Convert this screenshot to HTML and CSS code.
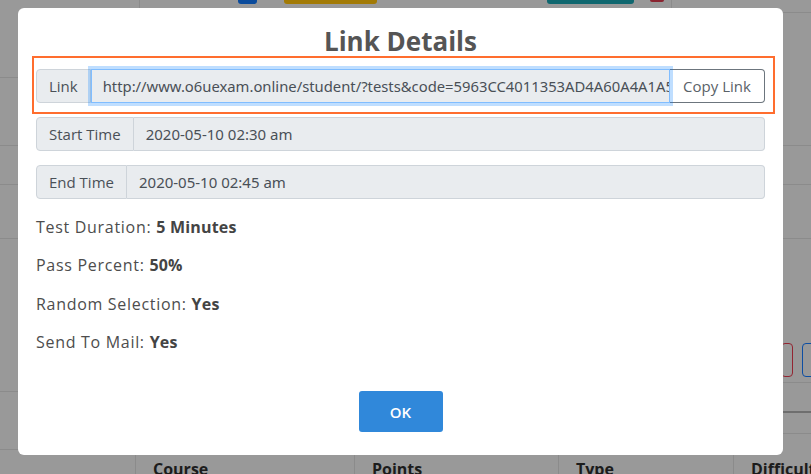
FILE: index.html
```html
<!DOCTYPE html>
<html lang="en">
<head>
<meta charset="utf-8">
<title>Link Details</title>
<link rel="stylesheet" href="styles.css">
</head>
<body>
<div class="page">
  <div class="toolbar">
    <span class="tb-sep tb-sep-1"></span>
    <span class="tb-btn tb-blue"></span>
    <span class="tb-btn tb-amber"></span>
    <span class="tb-btn tb-teal"></span>
    <span class="tb-btn tb-red"></span>
    <span class="tb-sep tb-sep-2"></span>
  </div>
  <div class="middle">
    <div class="strip strip-left">
      <div class="rule r-l1"></div>
      <div class="rule r-l2"></div>
      <div class="rule r-l3"></div>
      <div class="rule r-l4"></div>
      <div class="rule r-l5"></div>
      <div class="rule r-l6"></div>
    </div>
    <div class="strip strip-right">
      <div class="rule r-r1"></div>
      <div class="rule r-r2"></div>
      <div class="rule r-r3"></div>
      <div class="rule r-r4"></div>
      <div class="gap-r5"></div>
      <div class="btn-row">
        <span class="ghost ghost-red"></span>
        <span class="ghost ghost-blue"></span>
      </div>
      <div class="rule r-r6"></div>
      <div class="rule rule-dark r-r7"></div>
      <div class="rule r-r8"></div>
    </div>
  </div>
  <div class="thead">
    <div class="th th-0"></div>
    <div class="th th-1">Course</div>
    <div class="th th-2">Points</div>
    <div class="th th-3">Type</div>
    <div class="th th-4">Difficulty</div>
  </div>
</div>

<div class="modal">
  <h2 class="modal-title">Link Details</h2>

  <div class="igroup highlight">
    <span class="addon">Link</span>
    <div class="field field-focus"><span class="field-text">http://www.o6uexam.online/student/?tests&amp;code=5963CC4011353AD4A60A4A1A5</span></div>
    <button class="btn-copy" type="button">Copy Link</button>
  </div>

  <div class="igroup">
    <span class="addon">Start Time</span>
    <div class="field">2020-05-10 02:30 am</div>
  </div>

  <div class="igroup">
    <span class="addon">End Time</span>
    <div class="field">2020-05-10 02:45 am</div>
  </div>

  <div class="details">
    <p>Test Duration: <b>5 Minutes</b></p>
    <p>Pass Percent: <b>50%</b></p>
    <p>Random Selection: <b>Yes</b></p>
    <p>Send To Mail: <b>Yes</b></p>
  </div>

  <div class="modal-footer">
    <button class="btn-ok" type="button">OK</button>
  </div>
</div>
</body>
</html>
```
FILE: styles.css
```css
html, body {
  margin: 0;
  padding: 0;
}

body {
  width: 811px;
  height: 474px;
  overflow: hidden;
  background: #999999;
  font-family: "Open Sans", "Noto Sans", sans-serif;
}

/* ---------- background page (dimmed) ---------- */
.page {
  height: 474px;
  display: flex;
  flex-direction: column;
}

.toolbar {
  height: 8px;
  display: flex;
  align-items: flex-start;
  flex: none;
}

.tb-sep {
  width: 1px;
  height: 8px;
  background: #8b8b8b;
}
.tb-sep-1 { margin-left: 139px; }
.tb-sep-2 { margin-left: 7px; }

.tb-btn { display: block; height: 4px; border-radius: 0 0 3px 3px; }
.tb-blue  { margin-left: 98px;  width: 19px; background: #0a4b9c; }
.tb-amber { margin-left: 27px;  width: 93px; background: #a27a05; }
.tb-teal  { margin-left: 170px; width: 87px; background: #0f676f; }
.tb-red   { margin-left: 16px;  width: 14px; height: 2px; background: #8a2430; }

.middle {
  flex: 1;
  display: flex;
  justify-content: space-between;
}

.strip { display: flex; flex-direction: column; }
.strip-left { width: 18px; }
.strip-right { width: 28px; }

.rule {
  box-sizing: border-box;
  border-bottom: 1px solid #8b8b8b;
  flex: none;
}
.rule-dark { border-bottom: 2px solid #6e6e6e; }

.r-l1 { height: 70px; }
.r-l2 { height: 68px; }
.r-l3 { height: 39px; }
.r-l4 { height: 54px; }
.r-l5 { height: 153px; }
.r-l6 { height: 58px; }

.r-r1 { height: 5px; }
.r-r2 { height: 133px; }
.r-r3 { height: 39px; }
.r-r4 { height: 54px; }
.gap-r5 { height: 104px; flex: none; }
.btn-row { height: 34px; display: flex; flex: none; }
.r-r6 { height: 6px; }
.r-r7 { height: 30px; }
.r-r8 { height: 21px; }

.ghost {
  box-sizing: border-box;
  height: 34px;
  border-radius: 4px;
  flex: none;
}
.ghost-red  { margin-left: -2px; width: 12px; border: 1px solid #932532; }
.ghost-blue { margin-left: 9px;  width: 20px; border: 1px solid #0d4ea3; }

.thead {
  height: 19px;
  flex: none;
  display: flex;
  overflow: hidden;
}
.th {
  box-sizing: border-box;
  flex: none;
  border-left: 1px solid #8b8b8b;
  padding: 2px 0 0 17px;
  font-weight: 700;
  font-size: 16px;
  line-height: 24px;
  color: #1c1c1c;
  white-space: nowrap;
}
.th-0 { width: 135px; border-left: 0; }
.th-1 { width: 219px; }
.th-2 { width: 204px; }
.th-3 { width: 175px; }
.th-4 { width: 78px; }

/* ---------- modal ---------- */
.modal {
  position: fixed;
  top: 8px;
  left: 18px;
  width: 765px;
  height: 447px;
  box-sizing: border-box;
  padding: 18px 18px 23px;
  background: #ffffff;
  border-radius: 6px;
  display: flex;
  flex-direction: column;
}

.modal-title {
  margin: 0 0 12px;
  font-weight: 700;
  font-size: 26px;
  line-height: 31px;
  color: #555555;
  text-align: center;
}

.igroup {
  position: relative;
  display: flex;
  height: 34px;
  margin-bottom: 14px;
  flex: none;
}

.highlight::after {
  content: "";
  position: absolute;
  left: -4px;
  top: -13px;
  right: -10px;
  bottom: -11px;
  border: 2px solid #ff6d2e;
  pointer-events: none;
}

.addon {
  display: flex;
  align-items: center;
  padding: 0 12px;
  background: #e9ecef;
  border: 1px solid #ced4da;
  border-radius: 4px 0 0 4px;
  color: #495057;
  font-size: 15px;
  white-space: nowrap;
}

.field {
  flex: 1;
  min-width: 0;
  display: flex;
  align-items: center;
  padding: 0 12px;
  background: #e9ecef;
  border: 1px solid #ced4da;
  border-left: 0;
  border-radius: 0 4px 4px 0;
  color: #495057;
  font-family: "Noto Sans", "Open Sans", sans-serif;
  font-size: 15px;
  white-space: nowrap;
  overflow: hidden;
}

.field-text {
  overflow: hidden;
  min-width: 0;
}

.field-focus {
  position: relative;
  z-index: 1;
  border: 1px solid #80bdff;
  border-radius: 0;
  padding: 0 0 0 11px;
  font-size: 14.8px;
  box-shadow: 0 0 0 3px rgba(0, 123, 255, 0.25);
}

.btn-copy {
  flex: none;
  width: 95px;
  padding: 0;
  background: #ffffff;
  border: 1px solid #6c757d;
  border-left: 0;
  border-radius: 0 4px 4px 0;
  color: #5a6268;
  font-family: "Open Sans", sans-serif;
  font-size: 15px;
  white-space: nowrap;
}

.details {
  margin-top: 2px;
}
.details p {
  margin: 0 0 14.4px;
  font-size: 16px;
  line-height: 24px;
  letter-spacing: 0.7px;
  color: #4d4d4d;
}
.details b {
  font-weight: 700;
  letter-spacing: 0.2px;
  color: #444444;
}

.modal-footer {
  margin-top: auto;
  display: flex;
  justify-content: center;
}

.btn-ok {
  width: 84px;
  height: 41px;
  border: 0;
  border-radius: 3px;
  background: #3088da;
  color: #ffffff;
  font-family: "Open Sans", sans-serif;
  font-weight: 600;
  font-size: 15px;
}
```
